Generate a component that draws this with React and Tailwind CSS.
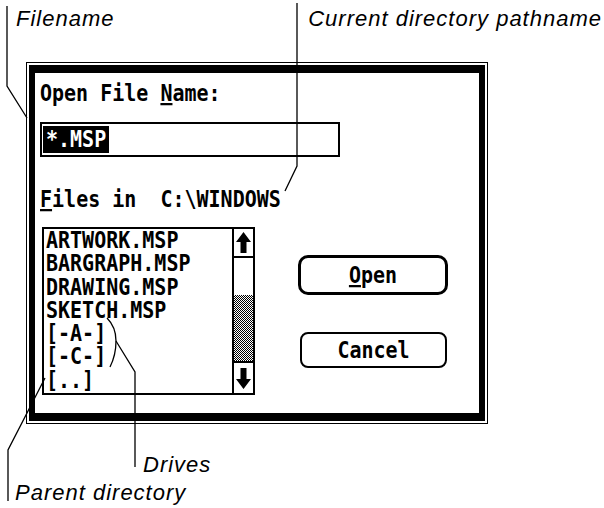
const mono = { fontFamily: '"DejaVu Sans Mono", "Liberation Mono", monospace' };
const sans = { fontFamily: '"Liberation Sans", Arial, sans-serif' };

function T({ children, className = '' }) {
  return (
    <span className={`inline-block origin-center scale-y-[1.12] whitespace-pre ${className}`}>
      {children}
    </span>
  );
}

function Arrow({ down }) {
  return (
    <svg width="19" height="29" viewBox="0 0 19 29" className={down ? 'rotate-180' : ''}>
      <path d="M9.5 4 L17 14 H12.5 V25 H6.5 V14 H2 Z" fill="#000" />
    </svg>
  );
}

const files = ['ARTWORK.MSP', 'BARGRAPH.MSP', 'DRAWING.MSP', 'SKETCH.MSP', '[-A-]', '[-C-]', '[..]'];

export default function App() {
  return (
    <div className="relative w-[604px] h-[508px] overflow-hidden bg-white text-black">
      {/* callout labels, top */}
      <div
        className="flex justify-between h-[62px] pl-[16px] pr-[2px] pt-[7px] text-[22px] leading-[24px] italic tracking-[1px]"
        style={sans}
      >
        <span>Filename</span>
        <span>Current directory pathname</span>
      </div>

      {/* dialog */}
      <div className="ml-[26px] w-[462px] h-[362px] border border-black p-[2px] bg-white">
        <div
          className="h-full border-x-[6px] border-y-8 border-black pl-[5px] pt-[9px] text-[20px] leading-[23px] font-bold"
          style={mono}
        >
          <T>
            Open File <span className="underline decoration-2 underline-offset-2">N</span>ame:
          </T>

          <div className="mt-[17px] w-[300px] h-[35px] border-2 border-black p-[1px] flex items-center">
            <span className="bg-black text-white px-[3px] h-[27px] flex items-center">
              <T>*.MSP</T>
            </span>
          </div>

          <div className="mt-[31px]">
            <T>
              <span className="underline decoration-2 underline-offset-2">F</span>iles in  C:\WINDOWS
            </T>
          </div>

          <div className="mt-[16px] flex">
            <div className="ml-[2px] w-[213px] h-[168px] border-2 border-black flex">
              <div className="flex-1 pl-[2px] flex flex-col leading-[23.3px]">
                {files.map((f) => (
                  <T key={f}>{f}</T>
                ))}
              </div>
              <div className="w-[21px] border-l-2 border-black flex flex-col">
                <div className="h-[29px] border-b-2 border-black flex items-center justify-center">
                  <Arrow />
                </div>
                <div className="h-[37px] bg-white" />
                <div className="flex-1 bg-[repeating-conic-gradient(#000_0%_25%,#fff_0%_50%)] bg-[length:2px_2px]" />
                <div className="h-[32px] border-t-2 border-black flex items-center justify-center">
                  <Arrow down />
                </div>
              </div>
            </div>

            <div className="ml-[43px] pt-[28px] flex flex-col">
              <div className="w-[150px] h-[40px] border-[3px] border-black rounded-[10px] flex items-center justify-center">
                <T>
                  <span className="underline decoration-2 underline-offset-2">O</span>pen
                </T>
              </div>
              <div className="mt-[37px] ml-[2px] w-[147px] h-[36px] border-2 border-black rounded-[8px] flex items-center justify-center">
                <T>Cancel</T>
              </div>
            </div>
          </div>
        </div>
      </div>

      {/* callout labels, bottom */}
      <div className="text-[22px] leading-[24px] italic tracking-[1px]" style={sans}>
        <div className="mt-[29px] pl-[143px]">Drives</div>
        <div className="mt-[4px] pl-[15px]">Parent directory</div>
      </div>

      {/* leader lines */}
      <svg
        className="absolute inset-0 pointer-events-none"
        width="604"
        height="508"
        viewBox="0 0 604 508"
        fill="none"
        stroke="#000"
        strokeWidth="1.3"
      >
        <path d="M7 6 V86 L27 118" />
        <path d="M297 3 V166 L285 191" />
        <path d="M107 318 C114 325 116 333 116 341 C116 350 114 359 110 367" />
        <path d="M116 341 L135 372 V467" />
        <path d="M45 378 L8 450 V501" />
      </svg>
    </div>
  );
}
